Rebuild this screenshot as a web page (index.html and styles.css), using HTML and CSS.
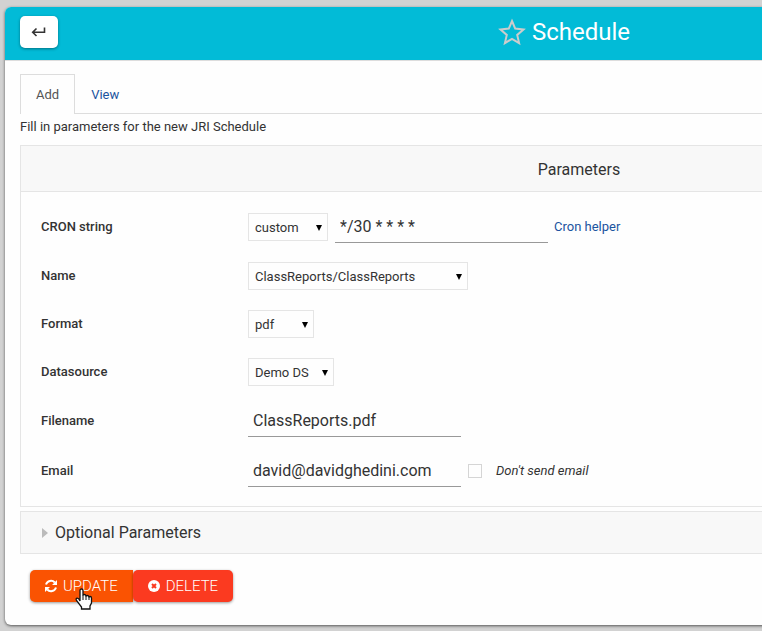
FILE: index.html
```html
<!DOCTYPE html>
<html lang="en">
<head>
<meta charset="utf-8">
<title>Schedule</title>
<link rel="stylesheet" href="styles.css">
</head>
<body>
<main class="card">
  <header class="topbar">
    <button class="back" type="button" aria-label="Back">
      <svg width="16" height="12" viewBox="0 0 16 12" fill="none" stroke="#333" stroke-width="1.6"><path d="M13.500 1.500v4.800H2.500M5.500 2.500L1.700 6.300L5.500 10"/></svg>
    </button>
    <h1 class="title">
      <svg width="28" height="28" viewBox="0 0 28 28" fill="none" stroke="#ccc" stroke-width="2"><path d="M14 3l3.200 7.600 8.300.8-6.300 5.500 1.900 8.200L14 20.800l-7.100 4.300 1.900-8.200L2.500 11.400l8.300-.8z"/></svg>
      <span>Schedule</span>
    </h1>
  </header>
  <div class="content">
    <nav class="tabs">
      <a class="tab active" href="#add">Add</a>
      <a class="tab" href="#view">View</a>
    </nav>
    <p class="intro">Fill in parameters for the new JRI Schedule</p>
    <form>
      <section class="panel">
        <h2 class="panel-title">Parameters</h2>
        <div class="fields">
          <div class="row text-row">
            <label class="name" for="cron">CRON string</label>
            <span class="pick cron-pick"><select id="cron"><option>custom</option></select></span>
            <input class="text" type="text" aria-label="CRON expression" value="*/30 * * * *">
            <a class="helper" href="#cron-helper">Cron helper</a>
          </div>
          <div class="row">
            <label class="name" for="report">Name</label>
            <span class="pick report-pick"><select id="report"><option>ClassReports/ClassReports</option></select></span>
          </div>
          <div class="row">
            <label class="name" for="format">Format</label>
            <span class="pick format-pick"><select id="format"><option>pdf</option></select></span>
          </div>
          <div class="row">
            <label class="name" for="source">Datasource</label>
            <span class="pick source-pick"><select id="source"><option>Demo DS</option></select></span>
          </div>
          <div class="row text-row">
            <label class="name" for="filename">Filename</label>
            <input class="text" id="filename" type="text" value="ClassReports.pdf">
          </div>
          <div class="row text-row">
            <label class="name" for="email">Email</label>
            <input class="text" id="email" type="text" value="david@davidghedini.com">
            <input class="check" id="nosend" type="checkbox">
            <label class="note" for="nosend">Don't send email</label>
          </div>
        </div>
      </section>
      <button class="optional" type="button"><span class="caret"></span>Optional Parameters</button>
      <div class="actions">
        <button class="action update" type="button">
          <svg width="14" height="14" viewBox="0 0 14 14" fill="none" stroke="#fff" stroke-width="2"><path d="M2 5.500A5.200 5.200 0 0 1 10.800 3.500M12 8.500A5.200 5.200 0 0 1 3.200 10.500"/><path d="M13 1v5H8zM1 13V8h5z" fill="#fff" stroke="none"/></svg>
          <span>UPDATE</span>
          <svg class="pointer" width="18" height="22" viewBox="0 0 18 22"><path d="M5 13V2.500Q5 1 6.500 1T8 2.500V7.500Q8 6.500 9.500 6.500T11 8.500Q11 7.500 12.500 7.500T14 9.500Q14 8.500 15.200 8.500T16.500 10V15L15 18V21H6.500V19L1.500 12.500Q.5 10.500 2 10.200T5 13z" fill="#fff" stroke="#111" stroke-width="1.300"/><path d="M8 7v5M11 8v4M14 9v3" stroke="#111"/></svg>
        </button>
        <button class="action delete" type="button">
          <svg width="14" height="14" viewBox="0 0 14 14"><circle cx="7" cy="7" r="6" fill="#fff"/><path d="M5 5l4 4M9 5l-4 4" stroke="#fb3a20" stroke-width="2"/></svg>
          <span>DELETE</span>
        </button>
      </div>
    </form>
  </div>
</main>
</body>
</html>
```
FILE: styles.css
```css
* { box-sizing: border-box; }
html { overflow-x: hidden; }
body {
  margin: 0;
  padding: 7px 5px 6px;
  background: #d2d2d2;
  color: #333;
  font: 13px/20px Roboto, sans-serif;
  overflow-x: clip;
}
button, input, select { font-family: inherit; color: inherit; }
a { color: #1c54a0; text-decoration: none; }
.card {
  min-width: 1118px;
  background: #fefefe;
  border-radius: 6px;
  box-shadow: 0 1px 3px rgba(0, 0, 0, .6);
}
.topbar {
  display: grid;
  grid-template-columns: 1fr auto 1fr;
  align-items: center;
  height: 54px;
  padding: 0 15px 4px;
  background: #02bbd7;
  border-bottom: 1px solid #ddd;
  border-radius: 6px 6px 0 0;
}
.back {
  display: grid;
  place-items: center;
  width: 38px;
  height: 32px;
  padding: 0;
  border: 0;
  border-radius: 5px;
  background: #fff;
  box-shadow: 0 1px 3px rgba(0, 0, 0, .4);
}
.title {
  display: flex;
  align-items: center;
  gap: 6px;
  margin: 0;
  color: #fff;
  font-size: 24px;
  font-weight: 400;
  line-height: 32px;
}
.content { padding: 13px 15px 23px; }
.tabs { display: flex; height: 40px; border-bottom: 1px solid #ddd; }
.tab { padding: 11px 16px; }
.tab.active {
  height: 40px;
  padding: 10px 15px;
  border: 1px solid #ddd;
  border-bottom: 0;
  background: #fefefe;
  color: #555;
}
.intro { margin: 3px 0 8px; }
.panel { border: 1px solid #e5e5e5; }
.panel-title {
  margin: 0;
  padding: 12px 0 10px 30px;
  background: #f8f8f8;
  border-bottom: 1px solid #e5e5e5;
  font-size: 16px;
  font-weight: 400;
  line-height: 23px;
  text-align: center;
}
.fields { padding: 10px 0 10px 20px; }
.row { display: flex; align-items: center; height: 48px; }
.text-row { height: 50px; }
.name { width: 207px; font-weight: 500; }
.pick { position: relative; }
.pick select {
  display: block;
  appearance: none;
  width: 100%;
  height: 28px;
  padding: 0 6px;
  border: 1px solid #e5e5e5;
  border-radius: 0;
  background: #fefefe;
  font-size: 13px;
}
.pick::after {
  content: "";
  position: absolute;
  top: 12px;
  right: 6px;
  border: 3px solid transparent;
  border-top: 6px solid #000;
  border-bottom: 0;
  pointer-events: none;
}
.cron-pick { width: 80px; margin-right: 7px; }
.report-pick { width: 220px; }
.format-pick { width: 66px; }
.source-pick { width: 86px; }
.text {
  width: 213px;
  height: 31px;
  padding: 0 5px;
  border: 0;
  border-bottom: 1px solid #999;
  background: transparent;
  font-size: 16px;
}
.helper { margin-left: 6px; }
.check {
  appearance: none;
  width: 14px;
  height: 14px;
  margin: 0 14px 0 7px;
  border: 1px solid #d5d5d5;
  background: #fefefe;
}
.note { font-style: italic; }
.optional {
  display: flex;
  align-items: center;
  gap: 7px;
  width: 100%;
  height: 43px;
  margin: 4px 0 16px;
  padding: 0 21px;
  border: 1px solid #e5e5e5;
  background: #f8f8f8;
  font-size: 16px;
}
.caret {
  border: 5px solid transparent;
  border-left: 6px solid #bbb;
  border-right: 0;
}
.actions { display: flex; padding-left: 10px; }
.action {
  position: relative;
  display: flex;
  align-items: center;
  gap: 5px;
  height: 32px;
  padding: 0 15px 0 14px;
  border: 0;
  border-radius: 5px;
  color: #fff;
  font-size: 15px;
  font-weight: 300;
  box-shadow: 0 1px 3px rgba(0, 0, 0, .4);
}
.update { background: #fa5302; border-radius: 5px 0 0 5px; }
.delete { background: #fb3a20; }
.pointer { position: absolute; top: 18px; left: 45px; z-index: 1; }
```
